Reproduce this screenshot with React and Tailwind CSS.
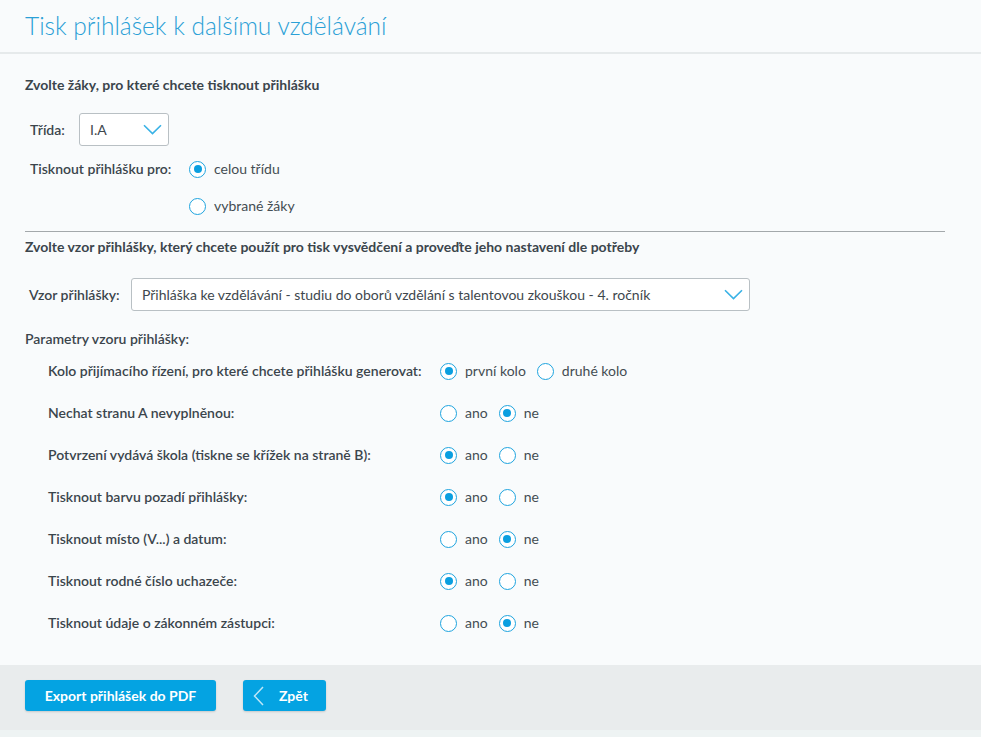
import { useState } from 'react';

function Chevron() {
    return (
        <svg width="19" height="11" viewBox="0 0 19 11" fill="none">
            <path d="M1 1.2 L9.5 9.6 L18 1.2" stroke="#39b2e6" strokeWidth="1.6" />
        </svg>
    );
}

function Radio({ checked, label, onClick }) {
    return (
        <button onClick={onClick} className="h-[20px] flex items-center gap-[8px] text-[14px] leading-[20px] text-[#444d53]">
            <span className="w-[17px] h-[17px] rounded-full border-[1.5px] border-[#1ea4df] bg-white flex items-center justify-center">
                {checked && <span className="w-[8px] h-[8px] rounded-full bg-[#0a9fe0]" />}
            </span>
            <span>{label}</span>
        </button>
    );
}

function Select({ value, className = '' }) {
    return (
        <div className={`h-[33px] bg-white border border-[#b9c0c4] rounded-[3px] flex items-center justify-between pl-[10px] pr-[6px] text-[14px] leading-[20px] text-[#3e474d] ${className}`}>
            <span>{value}</span>
            <Chevron />
        </div>
    );
}

const params = [
    { label: 'Kolo přijímacího řízení, pro které chcete přihlášku generovat:', options: ['první kolo', 'druhé kolo'], value: 0 },
    { label: 'Nechat stranu A nevyplněnou:', options: ['ano', 'ne'], value: 1 },
    { label: 'Potvrzení vydává škola (tiskne se křížek na straně B):', options: ['ano', 'ne'], value: 0 },
    { label: 'Tisknout barvu pozadí přihlášky:', options: ['ano', 'ne'], value: 0 },
    { label: 'Tisknout místo (V...) a datum:', options: ['ano', 'ne'], value: 1 },
    { label: 'Tisknout rodné číslo uchazeče:', options: ['ano', 'ne'], value: 0 },
    { label: 'Tisknout údaje o zákonném zástupci:', options: ['ano', 'ne'], value: 1 },
];

export default function App() {
    const [scope, setScope] = useState(0);
    const [values, setValues] = useState(params.map(p => p.value));

    const setParam = (i, v) => setValues(prev => prev.map((x, j) => (j === i ? v : x)));

    return (
        <div className="min-h-[737px] bg-[#f9fbfc] font-['Lato',sans-serif] text-[#3b454c] flex flex-col">
            <header className="h-[54px] border-b-2 border-[#e6eaeb] px-[25px] flex items-center">
                <h1 className="text-[24.5px] font-light text-[#2ba0d6] leading-none">Tisk přihlášek k dalšímu vzdělávání</h1>
            </header>

            <main className="px-[25px] pr-[36px] pt-[21px] pb-[21px]">
                <h2 className="text-[14px] font-bold leading-[20px]">Zvolte žáky, pro které chcete tisknout přihlášku</h2>

                <div className="mt-[18px] pl-[5px] flex items-center">
                    <span className="w-[49px] text-[14px] leading-[20px] font-semibold">Třída:</span>
                    <Select value="I.A" className="w-[90px]" />
                </div>

                <div className="mt-[13px] pl-[5px] flex">
                    <span className="w-[159px] text-[14px] font-semibold leading-[20px]">Tisknout přihlášku pro:</span>
                    <div className="flex flex-col gap-[17px]">
                        <Radio checked={scope === 0} label="celou třídu" onClick={() => setScope(0)} />
                        <Radio checked={scope === 1} label="vybrané žáky" onClick={() => setScope(1)} />
                    </div>
                </div>

                <div className="mt-[15px] border-t border-[#a3a8ab]" />

                <h2 className="mt-[5px] text-[14px] font-bold leading-[20px]">
                    Zvolte vzor přihlášky, který chcete použít pro tisk vysvědčení a proveďte jeho nastavení dle potřeby
                </h2>

                <div className="mt-[21px] pl-[4px] flex items-center">
                    <span className="w-[102px] text-[14px] leading-[20px] font-semibold">Vzor přihlášky:</span>
                    <Select value="Přihláška ke vzdělávání - studiu do oborů vzdělání s talentovou zkouškou - 4. ročník" className="w-[619px]" />
                </div>

                <p className="mt-[18px] text-[14px] font-semibold leading-[20px]">Parametry vzoru přihlášky:</p>

                <div className="mt-[1px] pl-[23px]">
                    {params.map((p, i) => (
                        <div key={i} className="h-[42px] flex items-center">
                            <span className="w-[392px] text-[14px] leading-[20px] font-semibold">{p.label}</span>
                            <div className="flex items-center gap-[11px]">
                                {p.options.map((o, k) => (
                                    <Radio key={k} checked={values[i] === k} label={o} onClick={() => setParam(i, k)} />
                                ))}
                            </div>
                        </div>
                    ))}
                </div>
            </main>

            <footer className="h-[65px] bg-[#e9eced] px-[25px] pt-[15px] flex items-start gap-[27px] shadow-[0_2px_2px_rgba(0,0,0,0.18)]">
                <button className="h-[31px] w-[191px] bg-[#04a3e2] rounded-[3px] text-white text-[14px] font-bold shadow-[0_1px_2px_rgba(0,0,0,0.15)]">
                    Export přihlášek do PDF
                </button>
                <button className="h-[31px] w-[83px] bg-[#04a3e2] rounded-[3px] text-white text-[14px] font-bold flex items-center pl-[10px] gap-[15px] shadow-[0_1px_2px_rgba(0,0,0,0.15)]">
                    <svg width="11" height="20" viewBox="0 0 11 20" fill="none">
                        <path d="M10 1 L1.5 10 L10 19" stroke="#bfe6f7" strokeWidth="1.5" />
                    </svg>
                    <span>Zpět</span>
                </button>
            </footer>
            <div className="flex-1 bg-[#eef3f3]" />
        </div>
    );
}
